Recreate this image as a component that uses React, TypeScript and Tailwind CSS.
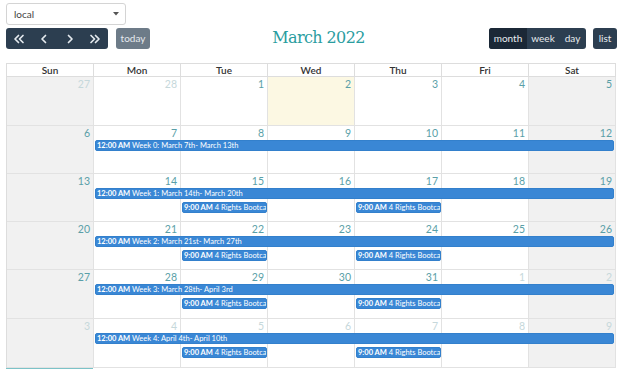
import React from "react";

type Ev = { col: number; span: number; row: number; time: string; title: string };
type Day = { n: number; other?: boolean; today?: boolean };

const weeks: { days: Day[]; events: Ev[] }[] = [
  {
    days: [
      { n: 27, other: true },
      { n: 28, other: true },
      { n: 1 },
      { n: 2, today: true },
      { n: 3 },
      { n: 4 },
      { n: 5 },
    ],
    events: [],
  },
  {
    days: [6, 7, 8, 9, 10, 11, 12].map((n) => ({ n })),
    events: [{ col: 2, span: 6, row: 2, time: "12:00 AM", title: "Week 0: March 7th- March 13th" }],
  },
  {
    days: [13, 14, 15, 16, 17, 18, 19].map((n) => ({ n })),
    events: [
      { col: 2, span: 6, row: 2, time: "12:00 AM", title: "Week 1: March 14th- March 20th" },
      { col: 3, span: 1, row: 3, time: "9:00 AM", title: "4 Rights Bootca" },
      { col: 5, span: 1, row: 3, time: "9:00 AM", title: "4 Rights Bootca" },
    ],
  },
  {
    days: [20, 21, 22, 23, 24, 25, 26].map((n) => ({ n })),
    events: [
      { col: 2, span: 6, row: 2, time: "12:00 AM", title: "Week 2: March 21st- March 27th" },
      { col: 3, span: 1, row: 3, time: "9:00 AM", title: "4 Rights Bootca" },
      { col: 5, span: 1, row: 3, time: "9:00 AM", title: "4 Rights Bootca" },
    ],
  },
  {
    days: [
      { n: 27 },
      { n: 28 },
      { n: 29 },
      { n: 30 },
      { n: 31 },
      { n: 1, other: true },
      { n: 2, other: true },
    ],
    events: [
      { col: 2, span: 6, row: 2, time: "12:00 AM", title: "Week 3: March 28th- April 3rd" },
      { col: 3, span: 1, row: 3, time: "9:00 AM", title: "4 Rights Bootca" },
      { col: 5, span: 1, row: 3, time: "9:00 AM", title: "4 Rights Bootca" },
    ],
  },
  {
    days: [3, 4, 5, 6, 7, 8, 9].map((n) => ({ n, other: true })),
    events: [
      { col: 2, span: 6, row: 2, time: "12:00 AM", title: "Week 4: April 4th- April 10th" },
      { col: 3, span: 1, row: 3, time: "9:00 AM", title: "4 Rights Bootca" },
      { col: 5, span: 1, row: 3, time: "9:00 AM", title: "4 Rights Bootca" },
    ],
  },
];

const colStart = ["", "col-start-1", "col-start-2", "col-start-3", "col-start-4", "col-start-5", "col-start-6", "col-start-7"];
const colSpan = ["", "col-span-1", "col-span-2", "col-span-3", "col-span-4", "col-span-5", "col-span-6", "col-span-7"];
const rowStart = ["", "row-start-1", "row-start-2", "row-start-3", "row-start-4"];

const heights = ["h-[49px]", "h-[48px]", "h-[48px]", "h-[48px]", "h-[49px]", "h-[49px]"];

function ChevL() {
  return (
    <svg width="8" height="10" viewBox="0 0 8 10" fill="none" stroke="currentColor" strokeWidth="1.7" strokeLinecap="round" strokeLinejoin="round">
      <path d="M5.5 1.5 L2 5 L5.5 8.5" />
    </svg>
  );
}
function ChevR() {
  return (
    <svg width="8" height="10" viewBox="0 0 8 10" fill="none" stroke="currentColor" strokeWidth="1.7" strokeLinecap="round" strokeLinejoin="round">
      <path d="M2.5 1.5 L6 5 L2.5 8.5" />
    </svg>
  );
}
function DChevL() {
  return (
    <svg width="12" height="10" viewBox="0 0 12 10" fill="none" stroke="currentColor" strokeWidth="1.7" strokeLinecap="round" strokeLinejoin="round">
      <path d="M5.5 1.5 L2 5 L5.5 8.5" />
      <path d="M10 1.5 L6.5 5 L10 8.5" />
    </svg>
  );
}
function DChevR() {
  return (
    <svg width="12" height="10" viewBox="0 0 12 10" fill="none" stroke="currentColor" strokeWidth="1.7" strokeLinecap="round" strokeLinejoin="round">
      <path d="M2 1.5 L5.5 5 L2 8.5" />
      <path d="M6.5 1.5 L10 5 L6.5 8.5" />
    </svg>
  );
}

export default function App() {
  return (
    <div className="w-[624px] h-[369px] overflow-hidden bg-white px-[6px] pt-[3px] font-['Lato','Noto_Sans',sans-serif] text-[#333]">
      <div className="w-[120px] h-[22px] border border-[#d4d4d4] rounded-[3px] flex items-center justify-between pl-[7px] pr-[6px] text-[10px] text-[#444]">
        <span>local</span>
        <svg width="6" height="4" viewBox="0 0 6 4">
          <path d="M0 0 L6 0 L3 3.5 Z" fill="#555" />
        </svg>
      </div>
      <div className="mt-[3px] h-[21px] flex items-center">
        <div className="flex h-[21px] w-[102px] rounded-[3px] bg-[#2c3e50] text-[#e4e9ee]">
          <div className="flex-1 flex items-center justify-center"><DChevL /></div>
          <div className="flex-1 flex items-center justify-center"><ChevL /></div>
          <div className="flex-1 flex items-center justify-center"><ChevR /></div>
          <div className="flex-1 flex items-center justify-center"><DChevR /></div>
        </div>
        <div className="ml-[8px] h-[21px] w-[34px] rounded-[3px] bg-[#6d7b88] text-[#e6eaee] text-[10px] flex items-center justify-center">
          today
        </div>
        <div className="flex-1 flex justify-center">
          <span className="font-['DejaVu_Serif','Liberation_Serif',serif] text-[16px] tracking-[-0.6px] text-[#2a9d9f] relative -left-[1px] -top-[1px]">March 2022</span>
        </div>
        <div className="flex h-[21px] rounded-[3px] bg-[#2c3e50] text-[#e8ecef] text-[10px] overflow-hidden">
          <div className="w-[38px] bg-[#1b2836] flex items-center justify-center">month</div>
          <div className="w-[32px] flex items-center justify-center">week</div>
          <div className="w-[27px] flex items-center justify-center">day</div>
        </div>
        <div className="ml-[7px] mr-[1px] h-[21px] w-[24px] rounded-[3px] bg-[#2c3e50] text-[#e8ecef] text-[10px] flex items-center justify-center">
          list
        </div>
      </div>
      <div className="mt-[14px] w-[610px] border-l border-t border-[#dddddd]">
        <div className="grid grid-cols-7 h-[13px]">
          {["Sun", "Mon", "Tue", "Wed", "Thu", "Fri", "Sat"].map((d) => (
            <div key={d} className="border-r border-b border-[#dddddd] flex items-center justify-center text-[10px] font-semibold text-[#333] leading-none">
              {d}
            </div>
          ))}
        </div>
        {weeks.map((w, wi) => (
          <div key={wi} className={`grid grid-cols-7 grid-rows-[14px_14px_14px_1fr] ${heights[wi]}`}>
            {w.days.map((d, di) => {
              const weekend = di === 0 || di === 6;
              const bg = d.today ? "bg-[#fcf8e3]" : weekend ? "bg-[#f1f1f1]" : "bg-white";
              return (
                <div
                  key={di}
                  className={`${colStart[di + 1]} row-start-1 row-span-4 border-r border-b border-[#e2e2e2] ${bg} flex justify-end items-start pr-[3px] pt-[1px]`}
                >
                  <span className={`text-[10.5px] leading-[13px] ${d.other ? "text-[#c6d8db]" : "text-[#5a9fa8]"}`}>{d.n}</span>
                </div>
              );
            })}
            {w.events.map((e, ei) => (
              <div
                key={ei}
                className={`${colStart[e.col]} ${colSpan[e.span]} ${rowStart[e.row]} mx-[1px] ${e.span > 1 ? "mr-[2px]" : ""} h-[11px] self-start bg-[#3a87d5] border border-[#3380cc] rounded-[2px] text-white text-[7.5px] leading-[9px] pl-[1px] overflow-hidden whitespace-nowrap z-10`}
              >
                <span className="font-bold">{e.time}</span> {e.title}
              </div>
            ))}
          </div>
        ))}
      </div>
      <div className="w-[87px] h-[2px] bg-[#7cc3c8]" />
    </div>
  );
}
